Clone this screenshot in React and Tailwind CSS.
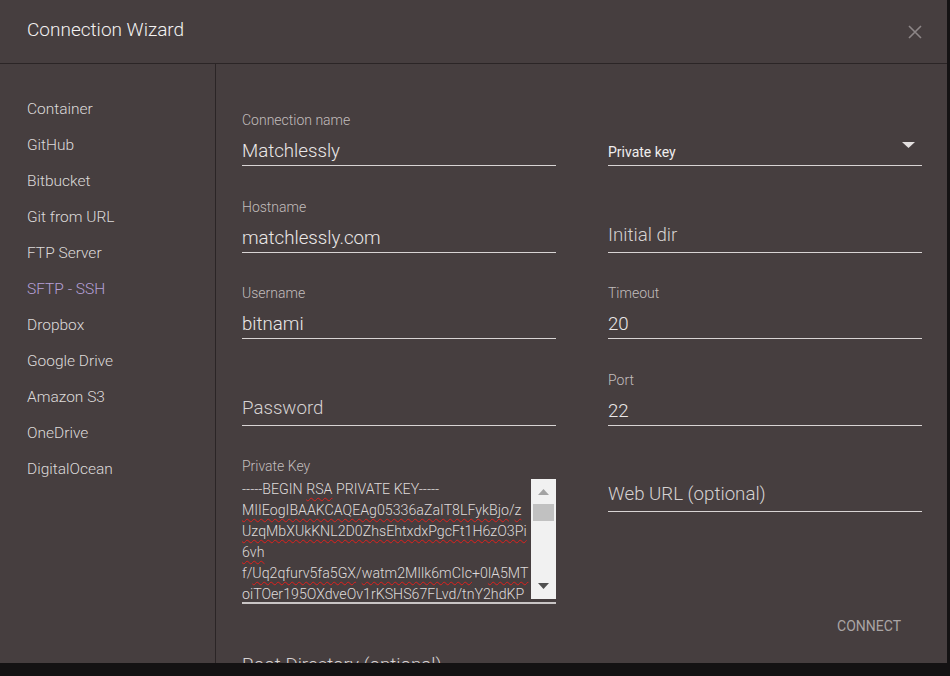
import React from 'react';

const menu = [
  'Container',
  'GitHub',
  'Bitbucket',
  'Git from URL',
  'FTP Server',
  'SFTP - SSH',
  'Dropbox',
  'Google Drive',
  'Amazon S3',
  'OneDrive',
  'DigitalOcean',
];

// red squiggle like the browser spellchecker
const Typo = ({ children }) => (
  <span className="underline decoration-wavy decoration-[#e0201c] decoration-1 underline-offset-[3px]">
    {children}
  </span>
);

const Field = ({ h, label, value, placeholder }) => (
  <div className={`${h} flex flex-col justify-end`}>
    {label && <div className="mb-2 text-[14px] leading-4 font-light text-[#c2bdbd]">{label}</div>}
    {value ? (
      <div className="h-[30px] border-b border-[#d8d4d4] text-[18.7px] leading-[30px] font-light text-[#ebe8e8]">{value}</div>
    ) : (
      <div className="h-[30px] border-b border-[#d8d4d4] text-[18.7px] leading-[24px] font-light text-[#d6d2d2]">{placeholder}</div>
    )}
  </div>
);

const KeyArea = () => (
  <div className="h-[178px] flex flex-col justify-end">
    <div className="mb-[5px] text-[14px] leading-4 font-light text-[#c2bdbd]">Private Key</div>
    <div className="h-[120px] flex">
      <div className="flex-1 overflow-hidden whitespace-nowrap text-[14.2px] leading-[21px] font-light text-[#dedada]">
        <div>-----BEGIN <Typo>RSA</Typo> PRIVATE KEY-----</div>
        <div><Typo>MIIEogIBAAKCAQEAg05336aZaIT8LFykBjo</Typo>/<Typo>z</Typo></div>
        <div><Typo>UzqMbXUkKNL2D0ZhsEhtxdxPgcFt1H6zO3Pi</Typo></div>
        <div><Typo>6vh</Typo></div>
        <div>f/<Typo>Uq2qfurv5fa5GX</Typo>/<Typo>watm2MIlk6mCIc</Typo>+0<Typo>lA5MT</Typo></div>
        <div>oiTOer195OXdveOv1rKSHS67FLvd/tnY2hdKP</div>
      </div>
      {/* scrollbar */}
      <div className="w-[25px] bg-[#f1f1f1] flex flex-col items-center">
        <svg width="11" height="6" viewBox="0 0 11 6" className="mt-[10px]">
          <path d="M5.5 0L11 6H0z" fill="#a3a3a3" />
        </svg>
        <div className="mt-[9px] h-[17px] w-[21px] bg-[#c1c1c1]" />
        <div className="flex-1" />
        <svg width="11" height="6" viewBox="0 0 11 6" className="mb-[10px]">
          <path d="M0 0H11L5.5 6z" fill="#505050" />
        </svg>
      </div>
    </div>
    <div className="mt-[3px] h-[2px] bg-[#c9c5c5]" />
  </div>
);

export default function App() {
  return (
    <div className="w-[950px] h-[676px] bg-[#141213] overflow-hidden font-['Roboto',sans-serif]">
      <div className="w-[947px] h-[663px] bg-[#463e3f] flex flex-col overflow-hidden">
        <header className="h-[64px] shrink-0 border-b border-[#2b2526] flex items-center justify-between pl-[27px] pr-[25px] pb-[2px]">
          <h1 className="text-[19px] font-light text-[#f4f2f2]">Connection Wizard</h1>
          <svg width="14" height="14" viewBox="0 0 14 14" className="mt-[2px]">
            <path d="M1 1L13 13M13 1L1 13" stroke="#8d8687" strokeWidth="1.6" />
          </svg>
        </header>

        <div className="flex flex-1 min-h-0">
          <aside className="w-[216px] shrink-0 border-r border-[#2b2526] pt-[27px] pl-[27px]">
            {menu.map((item) => (
              <div
                key={item}
                className={`h-9 leading-9 text-[15.5px] font-light ${item === 'SFTP - SSH' ? 'text-[#b6a0d8]' : 'text-[#dddada]'}`}
              >
                {item}
              </div>
            ))}
          </aside>

          <main className="flex-1 flex gap-[52px] pl-[26px] pt-4 overflow-hidden">
            <div className="w-[314px] shrink-0">
              <Field h="h-[86px]" label="Connection name" value="Matchlessly" />
              <Field h="h-[87px]" label="Hostname" value="matchlessly.com" />
              <Field h="h-[86px]" label="Username" value="bitnami" />
              <Field h="h-[87px]" placeholder="Password" />
              <KeyArea />
              <Field h="h-[79px]" placeholder="Root Directory (optional)" />
            </div>

            <div className="w-[314px] shrink-0">
              <div className="h-[86px] flex flex-col justify-end">
                <div className="h-[30px] border-b border-[#d8d4d4] flex items-end justify-between pb-[5px]">
                  <span className="text-[14px] leading-4 text-[#f0eeee]">Private key</span>
                  <svg width="13" height="6" viewBox="0 0 13 6" className="self-start mt-[6px] mr-[7px]">
                    <path d="M0 0H13L6.5 6z" fill="#e3dfdf" />
                  </svg>
                </div>
              </div>
              <Field h="h-[87px]" placeholder="Initial dir" />
              <Field h="h-[86px]" label="Timeout" value="20" />
              <Field h="h-[87px]" label="Port" value="22" />
              <Field h="h-[86px]" placeholder="Web URL (optional)" />
              <div className="mt-[96px] flex justify-end pr-[5px]">
                <button className="h-9 px-4 text-[14px] leading-9 uppercase text-[#aaa5a5]">Connect</button>
              </div>
            </div>
          </main>
        </div>
      </div>
    </div>
  );
}
